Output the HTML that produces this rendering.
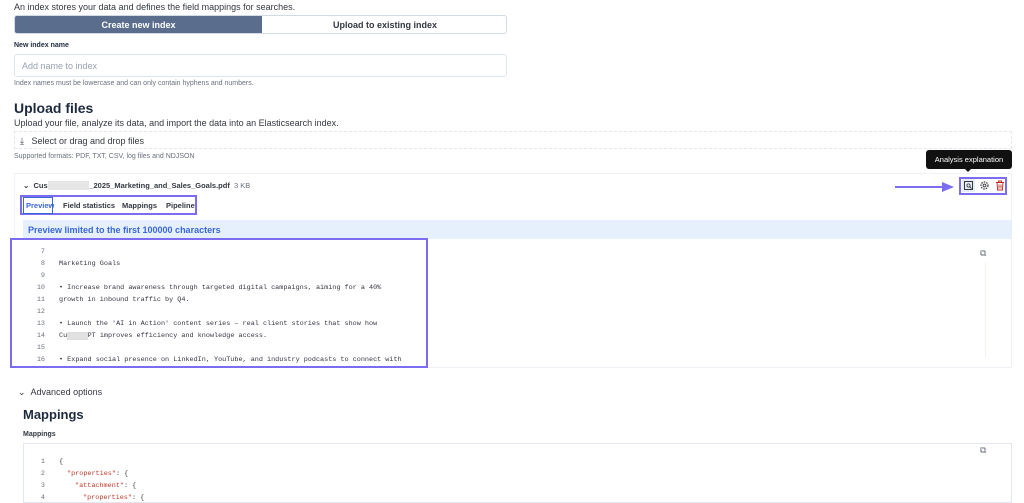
<!DOCTYPE html>
<html><head><meta charset="utf-8"><style>
*{box-sizing:border-box;margin:0;padding:0}
body{width:1024px;height:500px;overflow:hidden;background:#fff;font-family:"Liberation Sans",sans-serif;color:#1d2a3e;position:relative}
.a{position:absolute}
.mono{font-family:"Liberation Mono",monospace;font-size:6.8px;color:#343741;white-space:nowrap}
.ln{position:absolute;width:20px;text-align:right;font-family:"Liberation Mono",monospace;font-size:6.8px;color:#69707d}
</style></head><body>
<div class="a" style="left:14px;top:2px;font-size:9px;color:#343741">An index stores your data and defines the field mappings for searches.</div>
<div class="a" style="left:14px;top:15px;width:493px;height:19px;border:1px solid #d3dae6;border-radius:3px;overflow:hidden">
 <div class="a" style="left:0;top:0;width:247px;height:19px;background:#5a6d8c;color:#fff;font-size:9px;font-weight:bold;text-align:center;line-height:18px">Create new index</div>
 <div class="a" style="left:247px;top:0;width:246px;height:19px;color:#343741;font-size:9px;font-weight:bold;text-align:center;line-height:18px">Upload to existing index</div>
</div>
<div class="a" style="left:14px;top:42px;font-size:7px;font-weight:bold">New index name</div>
<div class="a" style="left:14px;top:54px;width:493px;height:23px;border:1px solid #dfe5ef;border-radius:3px;font-size:9px;color:#98a2b3;padding:6px 7px">Add name to index</div>
<div class="a" style="left:14px;top:80px;font-size:7px;color:#69707d">Index names must be lowercase and can only contain hyphens and numbers.</div>
<div class="a" style="left:14px;top:100px;font-size:14px;font-weight:bold">Upload files</div>
<div class="a" style="left:14px;top:118px;font-size:9px;color:#343741">Upload your file, analyze its data, and import the data into an Elasticsearch index.</div>
<div class="a" style="left:14px;top:131px;width:998px;height:18px;border:1px dashed #e3e8f0;font-size:9px;color:#343741;padding:4px 0 0 5px">⤓ &nbsp; Select or drag and drop files</div>
<div class="a" style="left:14px;top:153px;font-size:7px;color:#69707d">Supported formats: PDF, TXT, CSV, log files and NDJSON</div>
<div class="a" style="left:14px;top:173px;width:998px;height:195px;border:1px solid #eef1f6"></div>
<div class="a" style="left:23px;top:181px;font-size:7.5px;font-weight:bold;color:#343741">⌄ &nbsp;Cus<span style="background:#e6e6e6;color:#e6e6e6">xxxxxxxxxx</span>_2025_Marketing_and_Sales_Goals.pdf <span style="font-weight:normal;color:#69707d">&nbsp;3 KB</span></div>
<div class="a" style="left:20px;top:195px;width:177px;height:20px;border:2px solid #7b6cf0"></div>
<div class="a" style="left:23px;top:197px;width:30px;height:17px;border:1px solid #3a67d8"></div>
<div class="a" style="left:26px;top:201px;font-size:7.5px;font-weight:bold;color:#3a67d8">Preview</div>
<div class="a" style="left:63px;top:201px;font-size:7.5px;font-weight:bold;color:#343741">Field statistics</div>
<div class="a" style="left:122px;top:201px;font-size:7.5px;font-weight:bold;color:#343741">Mappings</div>
<div class="a" style="left:166px;top:201px;font-size:7.5px;font-weight:bold;color:#343741">Pipeline</div>
<div class="a" style="left:23px;top:220px;width:989px;height:19px;background:#e6f0fd;font-size:9px;font-weight:bold;color:#3a67d8;padding:5px 5px">Preview limited to the first 100000 characters</div>
<div class="a" style="left:10px;top:238px;width:418px;height:130px;border:2px solid #7b6cf0;overflow:hidden;background:#fff">
 <div class="ln" style="left:13px;top:8px">7</div>
 <div class="ln" style="left:13px;top:20px">8</div><div class="a mono" style="left:47px;top:20px">Marketing Goals</div>
 <div class="ln" style="left:13px;top:32px">9</div>
 <div class="ln" style="left:13px;top:44px">10</div><div class="a mono" style="left:47px;top:44px">• Increase brand awareness through targeted digital campaigns, aiming for a 40%</div>
 <div class="ln" style="left:13px;top:56px">11</div><div class="a mono" style="left:47px;top:56px">growth in inbound traffic by Q4.</div>
 <div class="ln" style="left:13px;top:68px">12</div>
 <div class="ln" style="left:13px;top:80px">13</div><div class="a mono" style="left:47px;top:80px">• Launch the 'AI in Action' content series – real client stories that show how</div>
 <div class="ln" style="left:13px;top:92px">14</div><div class="a mono" style="left:47px;top:92px">Cu<span style="background:#e0e0e0;color:#e0e0e0">xxxxx</span>PT improves efficiency and knowledge access.</div>
 <div class="ln" style="left:13px;top:104px">15</div>
 <div class="ln" style="left:13px;top:116px">16</div><div class="a mono" style="left:47px;top:116px">• Expand social presence on LinkedIn, YouTube, and industry podcasts to connect with</div>
</div>
<div class="a" style="left:980px;top:248px;font-size:9px;color:#69707d">⧉</div>
<div class="a" style="left:985px;top:262px;width:1px;height:95px;background:#eef1f6"></div>
<div class="a" style="left:926px;top:150px;width:86px;height:19px;background:#111;border-radius:3px;color:#fff;font-size:7.5px;text-align:center;line-height:19px">Analysis explanation</div>
<div class="a" style="left:964px;top:168px;width:0;height:0;border-left:4px solid transparent;border-right:4px solid transparent;border-top:4px solid #111"></div>
<div class="a" style="left:895px;top:186px;width:48px;height:2px;background:#7b6cf0"></div>
<div class="a" style="left:942px;top:182px;width:0;height:0;border-top:5px solid transparent;border-bottom:5px solid transparent;border-left:12px solid #7b6cf0"></div>
<div class="a" style="left:959px;top:177px;width:48px;height:18px;border:2px solid #7b6cf0"></div>
<div class="a" style="left:962px;top:179px;width:13px;height:13px;background:#e8ecf3"></div>
<svg class="a" style="left:963px;top:180px" width="11" height="11" viewBox="0 0 11 11"><rect x="1.5" y="1.5" width="8" height="8" fill="none" stroke="#343741"/><circle cx="5.5" cy="5.5" r="1.6" fill="none" stroke="#343741" stroke-width=".8"/><path d="M6.7 6.7L8.5 8.5" stroke="#343741"/></svg>
<svg class="a" style="left:979px;top:180px" width="11" height="11" viewBox="0 0 11 11"><circle cx="5.5" cy="5.5" r="3.5" fill="none" stroke="#343741" stroke-width="1.2" stroke-dasharray="1.6 1"/><circle cx="5.5" cy="5.5" r="1.4" fill="none" stroke="#343741" stroke-width=".9"/></svg>
<svg class="a" style="left:995px;top:180px" width="10" height="11" viewBox="0 0 10 11"><path d="M1 2.5h8M3.5 2.5V1h3v1.5M2 2.5l.6 7.5h4.8l.6-7.5M4 4.5v4M6 4.5v4" fill="none" stroke="#bd271e" stroke-width=".9"/></svg>
<div class="a" style="left:18px;top:387px;font-size:9px;color:#343741">⌄ &nbsp;Advanced options</div>
<div class="a" style="left:23px;top:407px;font-size:13px;font-weight:bold">Mappings</div>
<div class="a" style="left:23px;top:431px;font-size:7px;font-weight:bold;color:#343741">Mappings</div>
<div class="a" style="left:23px;top:443px;width:989px;height:60px;border:1px solid #e3e8f0"></div>
<div class="a" style="left:980px;top:445px;font-size:9px;color:#69707d">⧉</div>
<div class="ln" style="left:25px;top:458px">1</div><div class="a mono" style="left:59px;top:458px">{</div>
<div class="ln" style="left:25px;top:470px">2</div><div class="a mono" style="left:67px;top:470px"><span style="color:#c0392b">"properties"</span>: {</div>
<div class="ln" style="left:25px;top:482px">3</div><div class="a mono" style="left:75px;top:482px"><span style="color:#c0392b">"attachment"</span>: {</div>
<div class="ln" style="left:25px;top:494px">4</div><div class="a mono" style="left:83px;top:494px"><span style="color:#c0392b">"properties"</span>: {</div>
</body></html>
